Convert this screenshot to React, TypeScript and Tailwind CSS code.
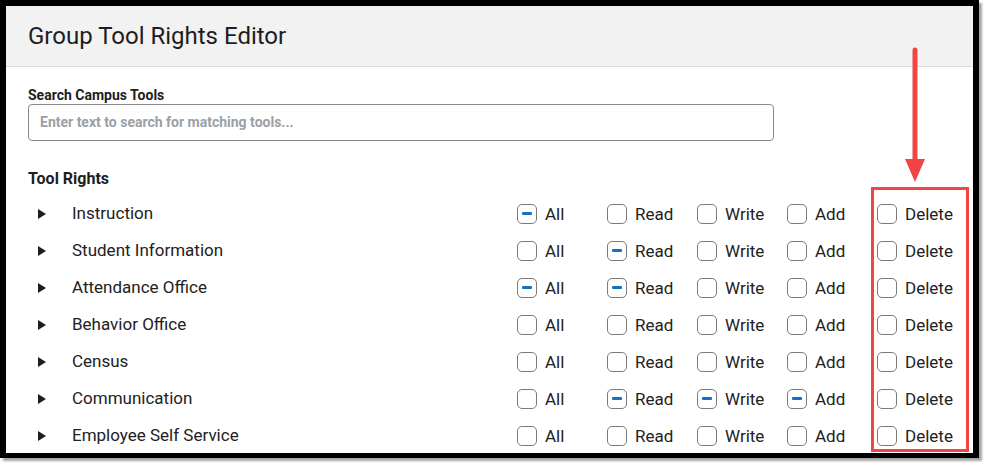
import React from "react";

type State = 0 | 1; // 0 empty, 1 indeterminate
const rows: { name: string; v: State[] }[] = [
  { name: "Instruction", v: [1, 0, 0, 0, 0] },
  { name: "Student Information", v: [0, 1, 0, 0, 0] },
  { name: "Attendance Office", v: [1, 1, 0, 0, 0] },
  { name: "Behavior Office", v: [0, 0, 0, 0, 0] },
  { name: "Census", v: [0, 0, 0, 0, 0] },
  { name: "Communication", v: [0, 1, 1, 1, 0] },
  { name: "Employee Self Service", v: [0, 0, 0, 0, 0] },
];
const labels = ["All", "Read", "Write", "Add", "Delete"];

function Box({ on }: { on: State }) {
  return (
    <span className="w-[20px] h-[20px] rounded-[5px] border border-[#7a7a7a] bg-white flex items-center justify-center shrink-0">
      {on ? <span className="w-[10px] h-[3px] rounded-[1px] bg-[#1670c4]" /> : null}
    </span>
  );
}

export default function App() {
  return (
    <div
      className="w-[985px] h-[465px] bg-white relative"
      style={{ fontFamily: "Roboto, 'Liberation Sans', sans-serif" }}
    >
      <div className="w-[979px] h-[458px] border-[6px] border-b-[5px] border-l-[6px] border-black shadow-[3px_3px_2px_rgba(0,0,0,0.35)] bg-white flex flex-col overflow-hidden">
        <div className="h-[61px] bg-[#f2f2f2] border-b border-[#dcdcdc] pl-[22px] flex items-center shrink-0">
          <span className="text-[24px] text-[#1e1e1e] leading-none">Group Tool Rights Editor</span>
        </div>
        <div className="pl-[22px] flex flex-col">
          <div className="mt-[19px] text-[14px] font-bold text-[#1e1e1e] leading-[18px]">Search Campus Tools</div>
          <div className="w-[746px] h-[37px] rounded-[4px] border border-[#8a8a8a] flex items-center pl-[11px] text-[14px] font-bold text-[#9aa0a6]">
            Enter text to search for matching tools...
          </div>
          <div className="mt-[28px] text-[16px] font-bold text-[#1e1e1e] leading-[20px]">Tool Rights</div>
          <div className="mt-[6px] flex flex-col">
            {rows.map((r) => (
              <div key={r.name} className="h-[37px] flex items-center">
                <div className="w-[43px] pl-[10px] shrink-0">
                  <svg width="8" height="10" viewBox="0 0 8 10">
                    <path d="M0 0 L8 5 L0 10 Z" fill="#1e1e1e" />
                  </svg>
                </div>
                <div className="w-[446px] pl-[1px] text-[17px] text-[#222] shrink-0">{r.name}</div>
                {r.v.map((s, i) => (
                  <div key={i} className="w-[90px] flex items-center gap-[8px] shrink-0">
                    <Box on={s} />
                    <span className="text-[17px] text-[#222] mt-[3px]">{labels[i]}</span>
                  </div>
                ))}
              </div>
            ))}
          </div>
        </div>
      </div>
      <div className="absolute left-[871px] top-[187px] w-[98px] h-[265px] border-[3px] border-[#f24444]" />
      <svg className="absolute left-[900px] top-[45px]" width="30" height="140" viewBox="0 0 30 140">
        <line x1="15" y1="5" x2="15" y2="118" stroke="#f24444" strokeWidth="5" strokeLinecap="round" />
        <path d="M5 114 L25 114 L15 137 Z" fill="#f24444" />
      </svg>
    </div>
  );
}
